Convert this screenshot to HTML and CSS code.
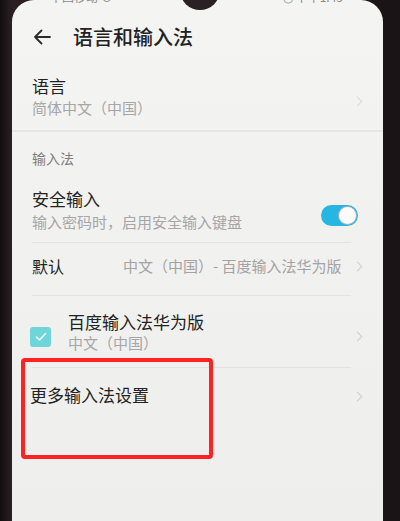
FILE: index.html
```html
<!DOCTYPE html>
<html lang="zh-CN">
<head>
<meta charset="utf-8">
<title>语言和输入法</title>
<link rel="stylesheet" href="styles.css">
</head>
<body>
<div class="phone">
  <div class="screen">
    <div class="notch"></div>
    <div class="status">
      <span class="status-l">中国移动 ⊙</span>
      <span class="status-r">◷ 下午1:45</span>
    </div>
    <header class="appbar">
      <svg class="back" width="18" height="16" viewBox="0 0 18 16"><path d="M17 8H2M8.5 1.5L2 8l6.5 6.5" fill="none" stroke="#2b2b2b" stroke-width="1.8" stroke-linecap="round" stroke-linejoin="round"/></svg>
      <h1 class="title">语言和输入法</h1>
    </header>

    <div class="item item-lang">
      <div class="texts">
        <div class="main">语言</div>
        <div class="sub">简体中文（中国）</div>
      </div>
      <span class="chev"></span>
    </div>
    <div class="divider wide"></div>

    <div class="section">输入法</div>
    <div class="item item-safe">
      <div class="texts">
        <div class="main">安全输入</div>
        <div class="sub">输入密码时，启用安全输入键盘</div>
      </div>
      <span class="toggle"><span class="knob"></span></span>
    </div>
    <div class="divider"></div>

    <div class="item item-default">
      <div class="main">默认</div>
      <div class="value">中文（中国）- 百度输入法华为版</div>
      <span class="chev"></span>
    </div>
    <div class="divider"></div>

    <div class="item item-ime">
      <span class="check"><svg width="12" height="10" viewBox="0 0 12 10"><path d="M1.5 5l3 3 6-6.5" fill="none" stroke="#e8fbfb" stroke-width="1.6" stroke-linecap="round" stroke-linejoin="round"/></svg></span>
      <div class="texts">
        <div class="main">百度输入法华为版</div>
        <div class="sub">中文（中国）</div>
      </div>
      <span class="chev"></span>
    </div>
    <div class="divider"></div>

    <div class="item item-more">
      <div class="main">更多输入法设置</div>
      <span class="chev"></span>
    </div>

    <div class="highlight"></div>
  </div>
</div>
</body>
</html>
```

FILE: styles.css
```css
* { box-sizing: border-box; }
html, body {
  margin: 0;
  padding: 0;
  width: 400px;
  height: 521px;
  overflow: hidden;
  background: #1b1517;
  font-family: "Noto Sans CJK SC", "Noto Sans", sans-serif;
}
.phone {
  width: 400px;
  height: 521px;
  padding-left: 12px;
  background: linear-gradient(90deg, #120e0f 0%, #2a2023 3%, #1a1416 100%);
}
.screen {
  position: relative;
  width: 371px;
  height: 521px;
  background: linear-gradient(180deg, #f4f4f3 0%, #f1f1f0 45%, #eeeeec 100%);
  border-top-left-radius: 22px;
  border-top-right-radius: 22px;
  overflow: hidden;
}
.notch {
  position: absolute;
  left: 168px;
  top: -30px;
  width: 40px;
  height: 40px;
  border-radius: 50%;
  background: #2a2124;
}
.status {
  height: 12px;
  display: flex;
  justify-content: space-between;
  padding: 0 40px 0 38px;
  font-size: 12px;
  line-height: 12px;
  color: #8a8a8a;
  overflow: hidden;
}
.status-l, .status-r { margin-top: -9px; }
.appbar {
  height: 50px;
  display: flex;
  align-items: center;
  padding-left: 21px;
}
.back { flex: none; margin-right: 22px; }
.title {
  margin: 0;
  font-size: 20px;
  font-weight: 500;
  color: #222;
  line-height: 26px;
}
.item {
  display: flex;
  align-items: center;
  padding: 0 22px 0 20px;
}
.texts { flex: 1; }
.main {
  font-size: 17px;
  line-height: 22px;
  color: #222;
}
.sub {
  font-size: 15px;
  line-height: 20px;
  color: #a6a6a6;
}
.item-lang { height: 68px; padding-top: 1px; }
.item-lang .sub { margin-top: 1px; }
.divider {
  height: 1px;
  margin: 0 32px 0 20px;
  background: #e2e2e0;
}
.divider.wide { margin: 0; height: 2px; background: #e6e6e4; }
.section {
  padding: 16px 20px 10px;
  font-size: 14px;
  line-height: 20px;
  color: #7e7e7e;
}
.item-safe { padding-top: 10px; padding-bottom: 10px; }
.item-safe .sub { margin-top: 2px; }
.toggle {
  flex: none;
  position: relative;
  width: 37px;
  height: 21px;
  border-radius: 11px;
  background: #27b5e2;
  margin-top: 10px;
  margin-right: 3px;
}
.knob {
  position: absolute;
  right: 2px;
  top: 2px;
  width: 17px;
  height: 17px;
  border-radius: 50%;
  background: #fbfbfb;
  box-shadow: 0 0 0 1px #9fb7bf;
}
.item-default { padding-top: 12px; padding-bottom: 18px; }
.item-default .main { width: 91px; flex: none; font-size: 16px; }
.value {
  flex: 1;
  font-size: 15px;
  line-height: 22px;
  color: #a3a3a3;
  white-space: nowrap;
}
.chev {
  flex: none;
  width: 7px;
  height: 7px;
  border-top: 1.3px solid #cdcdcd;
  border-right: 1.3px solid #cdcdcd;
  transform: rotate(45deg);
  margin-left: 4px;
}
.item-lang .chev { margin-top: 10px; border-color: #dadada; }
.item-ime { padding-top: 15px; padding-bottom: 15px; padding-left: 18px; }
.item-ime .sub { line-height: 18px; margin-top: 1px; }
.item-ime .chev { margin-top: 10px; }
.check {
  flex: none;
  width: 21px;
  height: 20px;
  border-radius: 3px;
  background: #6fd5d9;
  display: flex;
  align-items: center;
  justify-content: center;
  margin-right: 17px;
  margin-top: 10px;
}
.item-more { padding-top: 16px; padding-left: 18px; }
.item-more .main { flex: 1; }
.item-more .chev { margin-top: 2px; }
.highlight {
  position: absolute;
  left: 9px;
  top: 358px;
  width: 192px;
  height: 101px;
  border: 4px solid #ff2222;
  border-radius: 4px;
}
```
